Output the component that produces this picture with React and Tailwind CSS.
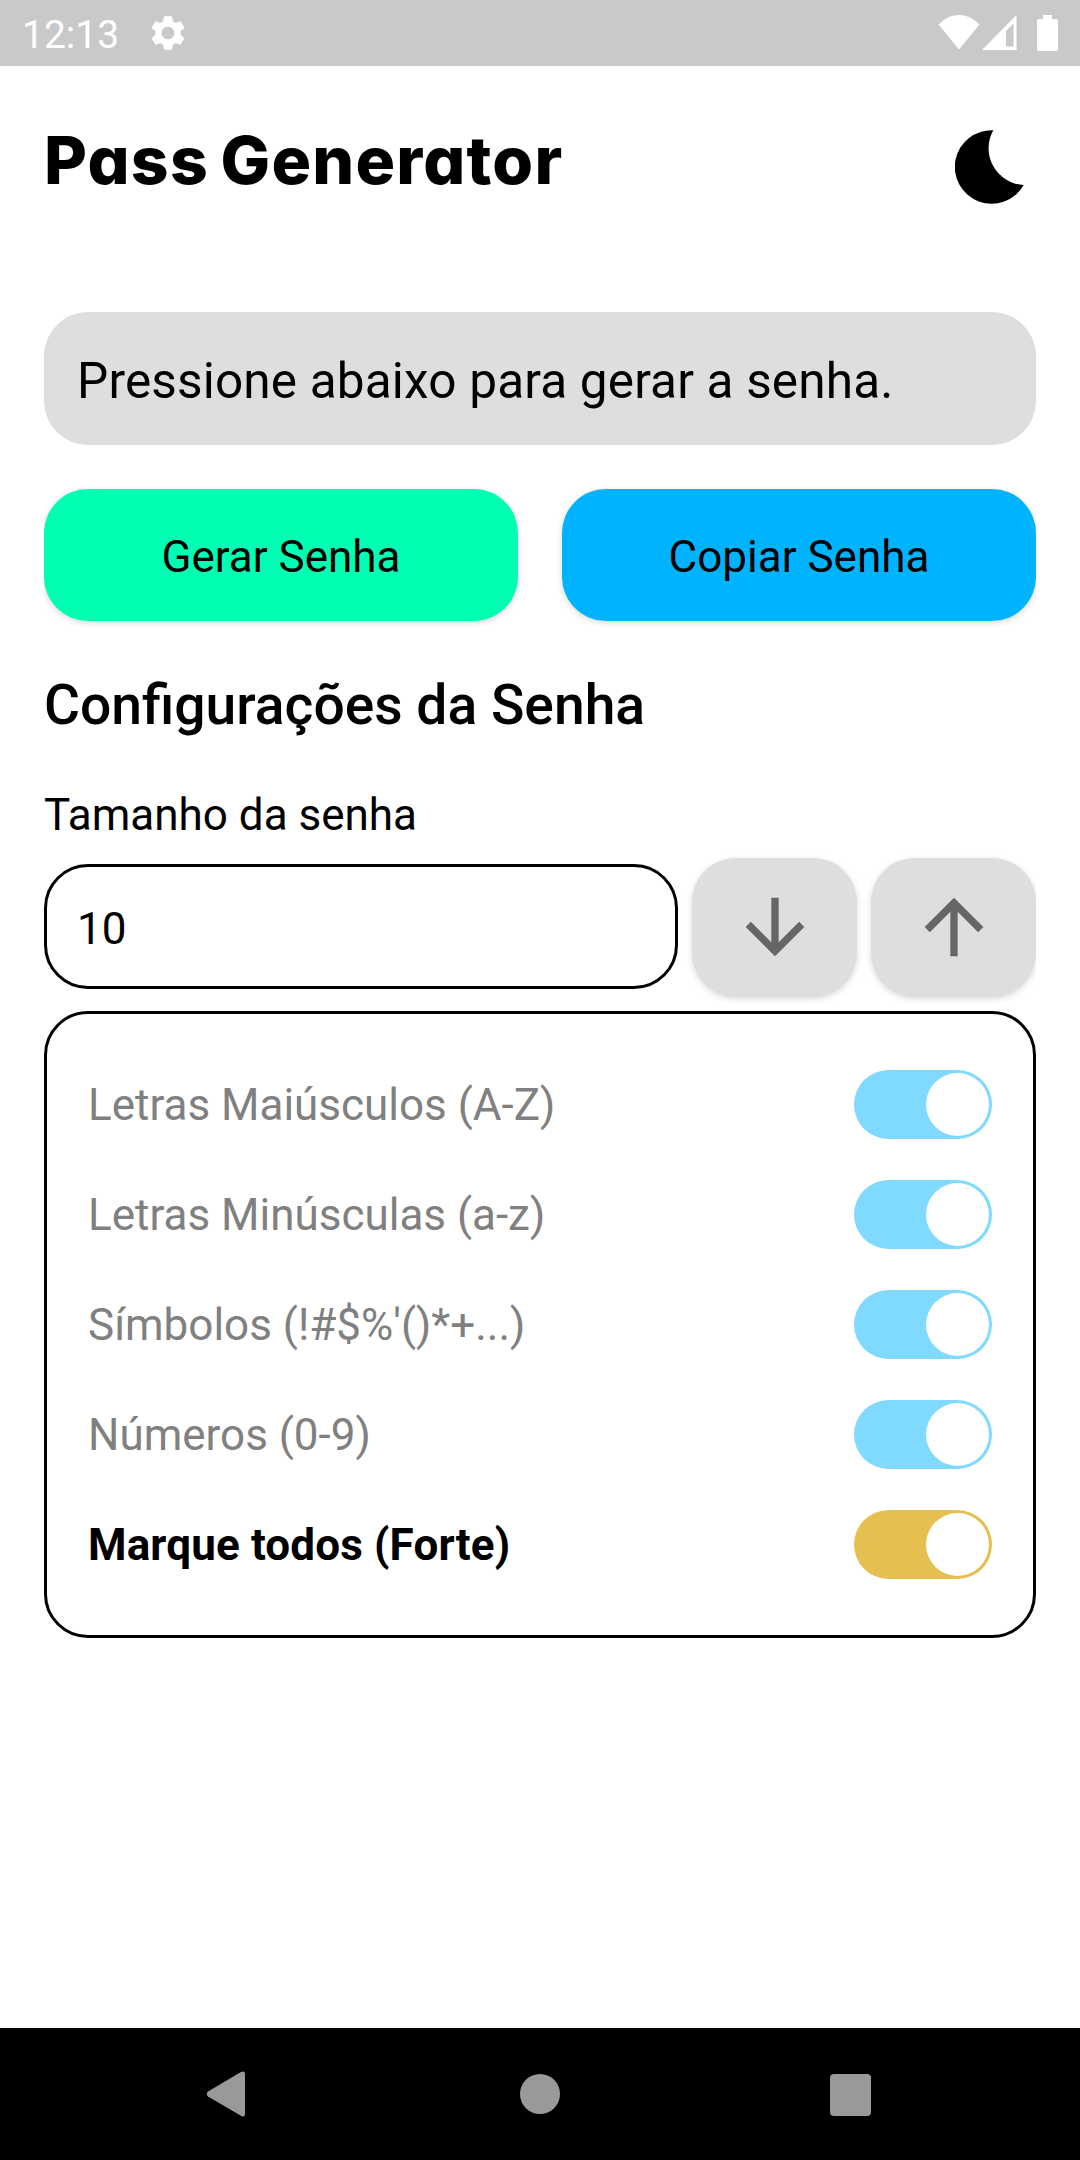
import React, { useState } from "react";

function StatusBar() {
  return (
    <div className="flex h-[66px] items-center bg-[#c9c9c9] pl-[22px] pr-[22px] text-white">
      <span className="w-[125px] pt-[3px] text-[39px] leading-[46px]">12:13</span>
      <svg className="size-[42px]" viewBox="0 0 24 24" fill="currentColor">
        <path d="M19.14 12.94c.04-.3.06-.61.06-.94 0-.32-.02-.64-.07-.94l2.03-1.58a.49.49 0 0 0 .12-.61l-1.92-3.32a.488.488 0 0 0-.59-.22l-2.39.96c-.5-.38-1.03-.7-1.62-.94l-.36-2.54a.484.484 0 0 0-.48-.41h-3.84c-.24 0-.43.17-.47.41l-.36 2.54c-.59.24-1.13.57-1.62.94l-2.39-.96c-.22-.08-.47 0-.59.22L2.74 8.87c-.12.21-.08.47.12.61l2.03 1.58c-.05.3-.09.63-.09.94s.02.64.07.94l-2.03 1.58a.49.49 0 0 0-.12.61l1.92 3.32c.12.22.37.29.59.22l2.39-.96c.5.38 1.03.7 1.62.94l.36 2.54c.05.24.24.41.48.41h3.84c.24 0 .44-.17.47-.41l.36-2.54c.59-.24 1.13-.56 1.62-.94l2.39.96c.22.08.47 0 .59-.22l1.92-3.32c.12-.22.07-.47-.12-.61l-2.01-1.58zM12 15.6c-1.98 0-3.6-1.62-3.6-3.6s1.62-3.6 3.6-3.6 3.6 1.62 3.6 3.6-1.62 3.6-3.6 3.6z" />
      </svg>
      <div className="ml-auto flex items-start">
        <svg className="h-[36px] w-[42px]" viewBox="0 0 42 36" fill="currentColor">
          <path d="M.5 9.5Q9.500 0 21 0t20.500 9.500L21 34.500z" />
        </svg>
        <svg className="ml-[2px] h-[36px] w-[35px]" viewBox="0 0 35 36" fill="currentColor">
          <path fillRule="evenodd" d="M34.500 0V35H0zM31.500 8.500L24 16V31.500h7.500z" />
        </svg>
        <svg className="ml-[20px] h-[36px] w-[21px]" viewBox="0 0 21 36" fill="currentColor">
          <path d="M6 0h9v4h4a2 2 0 0 1 2 2v28a2 2 0 0 1-2 2H2a2 2 0 0 1-2-2V6a2 2 0 0 1 2-2h4z" />
        </svg>
      </div>
    </div>
  );
}

function Toggle({ on, strong, onToggle }) {
  return (
    <button
      type="button"
      role="switch"
      aria-checked={on}
      onClick={onToggle}
      className={
        "flex h-[69px] w-[138px] items-center rounded-full p-[3px] " +
        (on ? "justify-end " : "justify-start ") +
        (strong ? "bg-[#e5c050]" : "bg-[#80d9ff]")
      }
    >
      <span className="size-[63px] rounded-full bg-white" />
    </button>
  );
}

function StepButton({ d, onClick, label }) {
  return (
    <button
      type="button"
      aria-label={label}
      onClick={onClick}
      className="flex h-[139px] w-[165px] items-center justify-center rounded-[44px] bg-[#dedede] pb-px shadow-[0_2px_6px_rgba(0,0,0,0.15)]"
    >
      <svg className="size-[88px]" viewBox="0 0 24 24" fill="#666666">
        <path d={d} />
      </svg>
    </button>
  );
}

const OPTIONS = [
  "Letras Maiúsculos (A-Z)",
  "Letras Minúsculas (a-z)",
  "Símbolos (!#$%'()*+...)",
  "Números (0-9)",
];

const DOWN = "M20 12l-1.410-1.410L13 16.170V4h-2v12.170l-5.580-5.590L4 12l8 8 8-8z";
const UP = "M4 12l1.410 1.410L11 7.830V20h2V7.830l5.580 5.590L20 12l-8-8-8 8z";

export default function App() {
  const [size, setSize] = useState(10);
  const [checks, setChecks] = useState([true, true, true, true]);
  const all = checks.every(Boolean);

  return (
    <div className="flex h-[2160px] w-[1080px] flex-col bg-white font-['Roboto',sans-serif] text-black">
      <StatusBar />

      <main className="flex grow flex-col px-[44px]">
        <header className="flex h-[246px] items-start justify-between pr-[12px] pt-[61px]">
          <h1 className="font-['Inter',sans-serif] text-[66px] font-extrabold leading-[67px] tracking-[1.2px] [font-feature-settings:'cv11'] [word-spacing:-4px]">
            Pass Generator
          </h1>
          <svg className="mt-[3px] h-[74px] w-[69px]" viewBox="0 0 69 74">
            <path d="M38.300 .2A36.800 36.800 0 1 0 68.700 55A36.800 36.800 0 0 1 38.300 .2z" />
          </svg>
        </header>

        <div className="flex h-[133px] items-center rounded-[44px] bg-[#dedede] px-[33px] pt-[5px] text-[49.5px] tracking-[0.17px]">
          Pressione abaixo para gerar a senha.
        </div>

        <div className="mt-[23px] grid grid-cols-2 gap-[44px] overflow-x-clip pb-[10px] pt-[21px] text-[44px]">
          <button type="button" className="h-[132px] rounded-[44px] bg-[#00ffb3] pt-[3px] shadow-[0_2px_6px_rgba(0,0,0,0.15)]">
            Gerar Senha
          </button>
          <button type="button" className="h-[132px] rounded-[44px] bg-[#00b3ff] pt-[3px] shadow-[0_2px_6px_rgba(0,0,0,0.15)]">
            Copiar Senha
          </button>
        </div>

        <h2 className="mt-[42px] text-[55.2px] font-medium leading-[64px]">Configurações da Senha</h2>
        <p className="mt-[52px] text-[44px] leading-[52px]">Tamanho da senha</p>

        <div className="mt-[17px] flex items-center justify-between overflow-x-clip">
          <div className="mb-[2px] flex h-[125px] w-[634px] items-center rounded-[44px] border-[3px] border-black px-[30px] pt-[4px] text-[44px]">
            {size}
          </div>
          <StepButton label="Diminuir" d={DOWN} onClick={() => setSize(size - 1)} />
          <StepButton label="Aumentar" d={UP} onClick={() => setSize(size + 1)} />
        </div>

        <section className="mt-[14px] flex h-[627px] flex-col gap-[41px] rounded-[44px] border-[3px] border-black px-[41px] pt-[56px] text-[44px]">
          {OPTIONS.map((label, i) => (
            <div key={label} className="flex h-[69px] items-center justify-between">
              <span className="pt-px text-[#808080]">{label}</span>
              <Toggle
                on={checks[i]}
                onToggle={() => setChecks(checks.map((c, j) => (j === i ? !c : c)))}
              />
            </div>
          ))}
          <div className="flex h-[69px] items-center justify-between">
            <span className="pt-px font-bold tracking-[0.14px]">Marque todos (Forte)</span>
            <Toggle strong on={all} onToggle={() => setChecks(checks.map(() => !all))} />
          </div>
        </section>
      </main>

      <nav className="flex h-[132px] items-center justify-between bg-black pl-[206px] pr-[209px]">
        <svg className="h-[46px] w-[40px]" viewBox="0 0 40 46" fill="#999999">
          <path d="M34.500 1.200Q39 -1 39 3.500v39Q39 47 34.500 44.500L2 25.500Q-.5 23 2 20.500z" />
        </svg>
        <span className="ml-[4px] size-[40px] rounded-full bg-[#999999]" />
        <span className="mt-px h-[42px] w-[41px] rounded-[4px] bg-[#999999]" />
      </nav>
    </div>
  );
}
